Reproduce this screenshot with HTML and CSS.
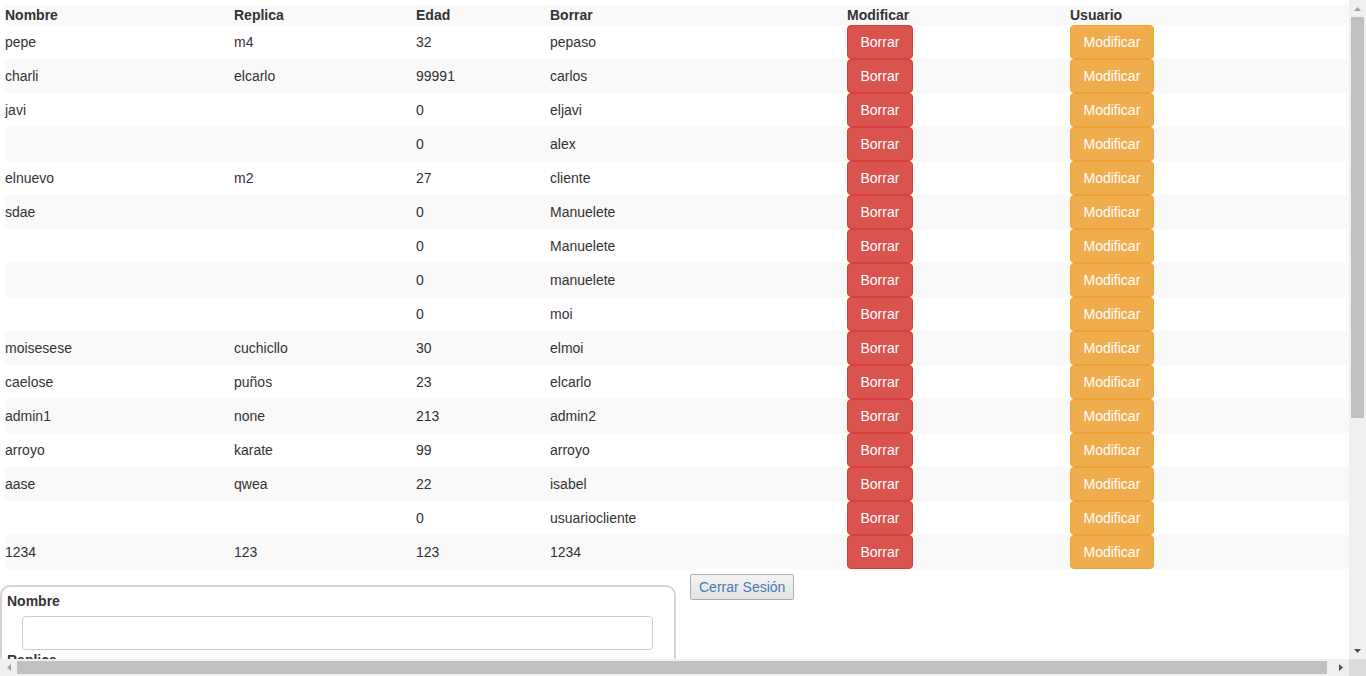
FILE: index.html
```html
<!DOCTYPE html>
<html lang="es">
<head>
<meta charset="utf-8">
<title>Usuarios</title>
<link rel="stylesheet" href="styles.css">
</head>
<body>
<div class="screen">
  <div class="viewport">
    <div class="page">
      <table class="users">
        <colgroup>
          <col class="c1"><col class="c2"><col class="c3"><col class="c4"><col class="c5"><col class="c6">
        </colgroup>
        <tbody>
          <tr class="head"><th>Nombre</th><th>Replica</th><th>Edad</th><th>Borrar</th><th>Modificar</th><th>Usuario</th></tr>
          <tr><td>pepe</td><td>m4</td><td>32</td><td>pepaso</td><td><button class="btn danger">Borrar</button></td><td><button class="btn warning">Modificar</button></td></tr>
          <tr><td>charli</td><td>elcarlo</td><td>99991</td><td>carlos</td><td><button class="btn danger">Borrar</button></td><td><button class="btn warning">Modificar</button></td></tr>
          <tr><td>javi</td><td></td><td>0</td><td>eljavi</td><td><button class="btn danger">Borrar</button></td><td><button class="btn warning">Modificar</button></td></tr>
          <tr><td></td><td></td><td>0</td><td>alex</td><td><button class="btn danger">Borrar</button></td><td><button class="btn warning">Modificar</button></td></tr>
          <tr><td>elnuevo</td><td>m2</td><td>27</td><td>cliente</td><td><button class="btn danger">Borrar</button></td><td><button class="btn warning">Modificar</button></td></tr>
          <tr><td>sdae</td><td></td><td>0</td><td>Manuelete</td><td><button class="btn danger">Borrar</button></td><td><button class="btn warning">Modificar</button></td></tr>
          <tr><td></td><td></td><td>0</td><td>Manuelete</td><td><button class="btn danger">Borrar</button></td><td><button class="btn warning">Modificar</button></td></tr>
          <tr><td></td><td></td><td>0</td><td>manuelete</td><td><button class="btn danger">Borrar</button></td><td><button class="btn warning">Modificar</button></td></tr>
          <tr><td></td><td></td><td>0</td><td>moi</td><td><button class="btn danger">Borrar</button></td><td><button class="btn warning">Modificar</button></td></tr>
          <tr><td>moisesese</td><td>cuchicllo</td><td>30</td><td>elmoi</td><td><button class="btn danger">Borrar</button></td><td><button class="btn warning">Modificar</button></td></tr>
          <tr><td>caelose</td><td>puños</td><td>23</td><td>elcarlo</td><td><button class="btn danger">Borrar</button></td><td><button class="btn warning">Modificar</button></td></tr>
          <tr><td>admin1</td><td>none</td><td>213</td><td>admin2</td><td><button class="btn danger">Borrar</button></td><td><button class="btn warning">Modificar</button></td></tr>
          <tr><td>arroyo</td><td>karate</td><td>99</td><td>arroyo</td><td><button class="btn danger">Borrar</button></td><td><button class="btn warning">Modificar</button></td></tr>
          <tr><td>aase</td><td>qwea</td><td>22</td><td>isabel</td><td><button class="btn danger">Borrar</button></td><td><button class="btn warning">Modificar</button></td></tr>
          <tr><td></td><td></td><td>0</td><td>usuariocliente</td><td><button class="btn danger">Borrar</button></td><td><button class="btn warning">Modificar</button></td></tr>
          <tr><td>1234</td><td>123</td><td>123</td><td>1234</td><td><button class="btn danger">Borrar</button></td><td><button class="btn warning">Modificar</button></td></tr>
        </tbody>
      </table>
      <div class="bottom">
        <form class="panel">
          <label class="lbl">Nombre</label>
          <input class="field" type="text">
          <label class="lbl">Replica</label>
          <input class="field" type="text">
          <label class="lbl">Edad</label>
          <input class="field" type="text">
          <label class="lbl">Usuario</label>
          <input class="field" type="text">
          <label class="lbl">Contraseña</label>
          <input class="field" type="password">
        </form>
        <button class="logout" type="button">Cerrar Sesión</button>
      </div>
    </div>
  </div>
  <div class="vscroll">
    <div class="sbtn"><svg width="7" height="4" viewBox="0 0 7 4"><path d="M0 4L3.5 0L7 4Z" fill="#a3a3a3"/></svg></div>
    <div class="vtrack"><div class="vthumb"></div></div>
    <div class="sbtn"><svg width="7" height="4" viewBox="0 0 7 4"><path d="M0 0L3.5 4L7 0Z" fill="#505050"/></svg></div>
  </div>
  <div class="hscroll">
    <div class="sbtn"><svg width="4" height="7" viewBox="0 0 4 7"><path d="M4 0L0 3.5L4 7Z" fill="#a3a3a3"/></svg></div>
    <div class="htrack"><div class="hthumb"></div></div>
    <div class="sbtn"><svg width="4" height="7" viewBox="0 0 4 7"><path d="M0 0L4 3.5L0 7Z" fill="#505050"/></svg></div>
  </div>
  <div class="corner"></div>
</div>
</body>
</html>
```
FILE: styles.css
```css
html, body {
  margin: 0;
  padding: 0;
  overflow: hidden;
}
body {
  font-family: "Liberation Sans", Arial, sans-serif;
  font-size: 14px;
  line-height: 20px;
  color: #333;
  background: #fff;
}
.screen {
  display: grid;
  grid-template-columns: 1349px 17px;
  grid-template-rows: 659px 17px;
  width: 1366px;
  height: 676px;
}
.viewport {
  overflow: hidden;
  background: #fff;
}
.page {
  width: 1354px;
}
.users {
  border-collapse: collapse;
  border-spacing: 0;
  margin: 5px 0 0 5px;
  width: 1344px;
  table-layout: fixed;
}
.c1 { width: 229px; }
.c2 { width: 182px; }
.c3 { width: 134px; }
.c4 { width: 297px; }
.c5 { width: 223px; }
.c6 { width: 279px; }
.users th, .users td {
  padding: 0;
  text-align: left;
  vertical-align: middle;
  height: 34px;
}
.users th {
  height: 20px;
  font-weight: bold;
}
.users tr:nth-child(odd) {
  background: #f9f9f9;
}
.btn {
  display: block;
  height: 34px;
  padding: 6px 12.5px;
  font-family: inherit;
  font-size: 14px;
  line-height: 20px;
  color: #fff;
  border: 1px solid transparent;
  border-radius: 4px;
  box-sizing: border-box;
  cursor: pointer;
}
.danger {
  background: #d9534f;
  border-color: #d43f3a;
}
.warning {
  background: #f0ad4e;
  border-color: #eea236;
}
.bottom {
  display: flex;
  align-items: flex-start;
  gap: 14px;
  margin-top: 5px;
}
.panel {
  margin: 11px 0 0 0;
  width: 676px;
  box-sizing: border-box;
  border: 2px solid #d4d4d4;
  border-radius: 10px;
  padding: 4px 21px 10px 5px;
  display: flex;
  flex-direction: column;
}
.lbl {
  font-weight: bold;
  margin-bottom: 5px;
}
.field {
  margin: 0 0 0 15px;
  height: 34px;
  box-sizing: border-box;
  border: 1px solid #ccc;
  border-radius: 4px;
  padding: 6px 12px;
  font-family: inherit;
  font-size: 14px;
}
.logout {
  height: 26px;
  padding: 0 8px;
  font-family: "Liberation Sans", Arial, sans-serif;
  font-size: 14px;
  color: #4a7ab5;
  background: linear-gradient(#f4f4f4, #e2e2e2);
  border: 1px solid #adadad;
  border-radius: 2px;
}
.vscroll {
  display: flex;
  flex-direction: column;
  background: #f0f0f0;
}
.hscroll {
  display: flex;
  background: #f0f0f0;
}
.sbtn {
  width: 17px;
  height: 17px;
  flex: none;
  display: flex;
  align-items: center;
  justify-content: center;
}
.vtrack {
  flex: 1;
  padding: 0 2px;
}
.vthumb {
  height: 401px;
  background: #c1c1c1;
}
.htrack {
  flex: 1;
  padding: 2px 0;
}
.hthumb {
  width: 1310px;
  height: 13px;
  background: #c1c1c1;
}
.corner {
  background: #dcdcdc;
}
```
